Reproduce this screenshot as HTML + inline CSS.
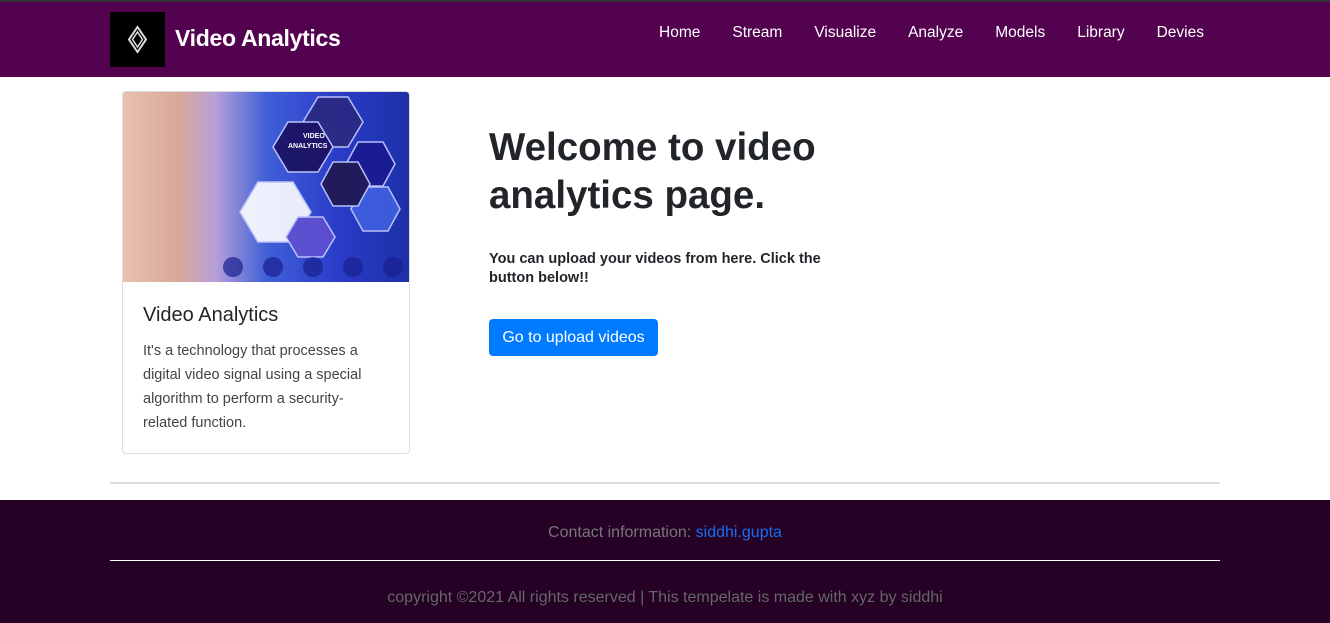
<!DOCTYPE html>
<html><head><meta charset="utf-8">
<style>
*{box-sizing:border-box;margin:0;padding:0}
body{width:1330px;height:623px;overflow:hidden;background:#fff;font-family:"Liberation Sans","DejaVu Sans",sans-serif;color:#212529}
.nav{position:absolute;left:0;top:0;width:1330px;height:77px;background:#52024f;border-top:2px solid #333}
.logo{position:absolute;left:110px;top:10px;width:55px;height:55px;background:#000}
.brand{position:absolute;left:175px;top:23px;color:#fff;font-size:23px;font-weight:bold;letter-spacing:-0.3px}
.links{position:absolute;top:22px;right:126px;display:flex}
.links a{color:#fff;font-size:15.5px;text-decoration:none;margin-left:32px}
.card{position:absolute;left:122px;top:91px;width:288px;height:363px;border:1px solid #ddd;border-radius:4px;overflow:hidden}
.img{position:absolute;left:0;top:0;width:286px;height:190px;background:linear-gradient(90deg,#e8c0b0 0%,#d8a898 20%,#b8a0d8 32%,#4060d8 50%,#2a3cc8 75%,#1c30a8 100%)}
.card h5{position:absolute;left:20px;top:212px;font-size:20px;font-weight:normal;color:#212529}
.card p{position:absolute;left:20px;top:247px;width:232px;font-size:14.5px;line-height:24px;color:#444}
h1{position:absolute;left:489px;top:124px;font-size:38.5px;line-height:48px;font-weight:bold;color:#212529;width:420px}
.sub{position:absolute;left:489px;top:250px;width:380px;font-size:14.5px;line-height:19px;font-weight:bold}
.btn{position:absolute;left:489px;top:319px;width:169px;height:37px;background:#007bff;color:#fff;border-radius:4px;font-size:16px;text-align:center;line-height:37px}
.hr{position:absolute;left:110px;top:482px;width:1110px;height:2px;background:#ddd}
.foot{position:absolute;left:0;top:500px;width:1330px;height:123px;background:#250225}
.c1{position:absolute;top:24px;width:100%;text-align:center;color:#777;font-size:16px}
.c1 span{color:#1a6cf0}
.fl{position:absolute;left:110px;top:60px;width:1110px;height:1px;background:#fff}
.c2{position:absolute;top:89px;width:100%;text-align:center;color:#666;font-size:16px}
</style></head><body>
<div class="nav">
<div class="logo"><svg width="55" height="55" viewBox="0 0 55 55"><path d="M27.5 15 L36 27.5 L27.5 40 L19 27.5Z" fill="none" stroke="#ddd" stroke-width="2"/><path d="M27.5 20 L32.5 27.5 L27.5 35 L22.5 27.5Z" fill="none" stroke="#ddd" stroke-width="1.5"/></svg></div>
<div class="brand">Video Analytics</div>
<div class="links"><a>Home</a><a>Stream</a><a>Visualize</a><a>Analyze</a><a>Models</a><a>Library</a><a>Devies</a></div>
</div>
<div class="card">
<div class="img"><svg width="286" height="190" viewBox="0 0 286 190">
<g fill="#2a2a80" stroke="#c8d0ff" stroke-width="1.5" opacity="0.9">
<polygon points="195,5 225,5 240,30 225,55 195,55 180,30"/>
<polygon points="165,30 195,30 210,55 195,80 165,80 150,55" fill="#1a1060"/>
<polygon points="235,50 260,50 272,72 260,94 235,94 223,72" fill="#1a1a90"/>
<polygon points="135,90 170,90 188,120 170,150 135,150 117,120" fill="#fff"/>
<polygon points="175,125 200,125 212,145 200,165 175,165 163,145" fill="#6050d0"/>
<polygon points="240,95 265,95 277,117 265,139 240,139 228,117" fill="#4060e0"/>
<polygon points="210,70 235,70 247,92 235,114 210,114 198,92" fill="#201850"/>
</g>
<text x="180" y="46" fill="#fff" font-size="7" font-family="Liberation Sans" font-weight="bold">VIDEO</text>
<text x="165" y="56" fill="#fff" font-size="7" font-family="Liberation Sans" font-weight="bold">ANALYTICS</text>
<g fill="#1a2090" opacity="0.7"><circle cx="110" cy="175" r="10"/><circle cx="150" cy="175" r="10"/><circle cx="190" cy="175" r="10"/><circle cx="230" cy="175" r="10"/><circle cx="270" cy="175" r="10"/></g>
</svg></div>
<h5>Video Analytics</h5>
<p>It's a technology that processes a digital video signal using a special algorithm to perform a security-related function.</p>
</div>
<h1>Welcome to video analytics page.</h1>
<div class="sub">You can upload your videos from here. Click the button below!!</div>
<div class="btn">Go to upload videos</div>
<div class="hr"></div>
<div class="foot">
<div class="c1">Contact information: <span>siddhi.gupta</span></div>
<div class="fl"></div>
<div class="c2">copyright ©2021 All rights reserved | This tempelate is made with xyz by siddhi</div>
</div>
</body></html>
